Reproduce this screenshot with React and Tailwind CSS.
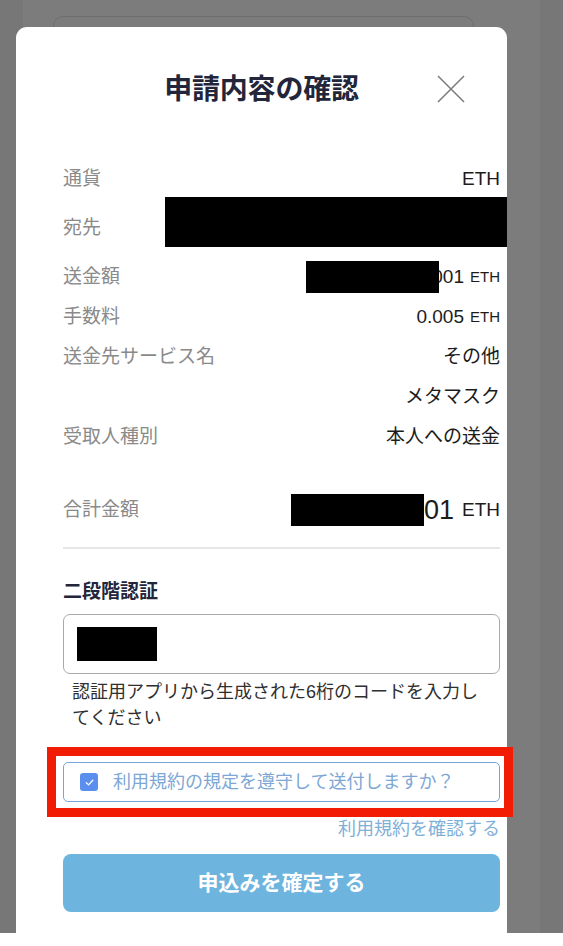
const font = { fontFamily: '"Liberation Sans", "Noto Sans CJK JP", sans-serif' };

const Row = ({ label, children, className = 'h-[40px]' }) => (
  <div className={`flex items-center justify-between ${className}`}>
    <span className="text-[19px] text-[#8a8a8a]">{label}</span>
    <div className="flex items-center text-[19px] text-[#1c1c1c]">{children}</div>
  </div>
);

const Eth = ({ size = 'text-[15px] ml-[6px]' }) => <span className={size}>ETH</span>;

export default function App() {
  return (
    <div style={font} className="h-[946px] w-full flex flex-col bg-white overflow-hidden">
      {/* backdrop */}
      <div className="relative flex-1 bg-[#777777]">
        {/* page behind the overlay */}
        <div className="absolute inset-y-0 left-[23px] right-[23px] bg-[#7c7c7c]" />
        <div className="absolute top-[16px] left-[53px] w-[421px] h-[40px] rounded-t-[10px] border border-[#6e6e6e]" />

        {/* modal */}
        <div className="relative mt-[27px] ml-[16px] w-[491px] h-[906px] bg-white rounded-t-[11px] pl-[47px] pr-[7px] flex flex-col">
          <div className="h-[132px] pt-[44px] flex justify-center">
            <h1 className="text-[28px] leading-[38px] font-bold text-[#23263a] -ml-[40px] tracking-[-0.2px]">申請内容の確認</h1>
          </div>
          <button className="absolute top-[48px] right-[42px] text-[#7a7a7a]">
            <svg viewBox="0 0 28 28" className="w-[28px] h-[28px]" fill="none" stroke="currentColor" strokeWidth="1.5">
              <path d="M1 1 L27 27 M27 1 L1 27" />
            </svg>
          </button>

          <Row label="通貨">
            <span>ETH</span>
          </Row>
          <Row label="宛先" className="h-[58px]">
            <div className="w-[342px] h-[50px] bg-black -mr-[7px] -mt-[12px]" />
          </Row>
          <Row label="送金額">
            <div className="relative z-10 w-[133px] h-[32px] bg-black -mr-[7px]" />
            <span>001</span>
            <Eth />
          </Row>
          <Row label="手数料">
            <span>0.005</span>
            <Eth />
          </Row>
          <Row label="送金先サービス名">
            <span>その他</span>
          </Row>
          <div className="h-[40px] flex items-center justify-end text-[19px] text-[#1c1c1c]">メタマスク</div>
          <Row label="受取人種別">
            <span>本人への送金</span>
          </Row>

          <Row label="合計金額" className="h-[40px] mt-[33px]">
            <div className="w-[133px] h-[32px] bg-black" />
            <span className="text-[27px]">01</span>
            <Eth size="text-[19px] ml-[8px]" />
          </Row>

          <div className="mt-[17px] h-[2px] bg-[#e6e6e6]" />

          <h2 className="mt-[30px] text-[19px] leading-[26px] font-bold text-[#23263a]">二段階認証</h2>
          <div className="mt-[9px] h-[60px] border border-[#a9a9a9] rounded-[7px] pl-[13px] pt-[12px]">
            <div className="w-[80px] h-[34px] bg-black" />
          </div>
          <p className="mt-[5px] pl-[9px] text-[18px] leading-[26px] text-[#2f2f2f]">
            認証用アプリから生成された6桁のコードを入力し
            <br />
            てください
          </p>

          <div className="relative mt-[31px]">
            <label className="h-[40px] flex items-center gap-[15px] pl-[16px] border-[1.5px] border-[#77a5d8] rounded-[5px]">
              <span className="w-[18px] h-[18px] rounded-[3px] bg-[#5b8fef] flex items-center justify-center">
                <svg viewBox="0 0 12 12" className="w-[11px] h-[11px]" fill="none" stroke="white" strokeWidth="1.4" strokeLinecap="round" strokeLinejoin="round">
                  <path d="M2.5 6.3 L5 8.6 L9.6 3.6" />
                </svg>
              </span>
              <span className="text-[18px] text-[#7da7d5]">利用規約の規定を遵守して送付しますか？</span>
            </label>
            <div className="absolute -left-[16px] -right-[13px] -top-[15px] -bottom-[15px] border-[9px] border-[#f21c05] pointer-events-none" />
          </div>

          <div className="mt-[14px] text-right text-[18px] leading-[26px] text-[#7fb0d8]">利用規約を確認する</div>

          <button className="mt-[12px] h-[58px] rounded-[8px] bg-[#6db4df] text-white text-[21px] font-bold">申込みを確定する</button>
        </div>
      </div>
      <div className="h-[13px] bg-white" />
    </div>
  );
}
